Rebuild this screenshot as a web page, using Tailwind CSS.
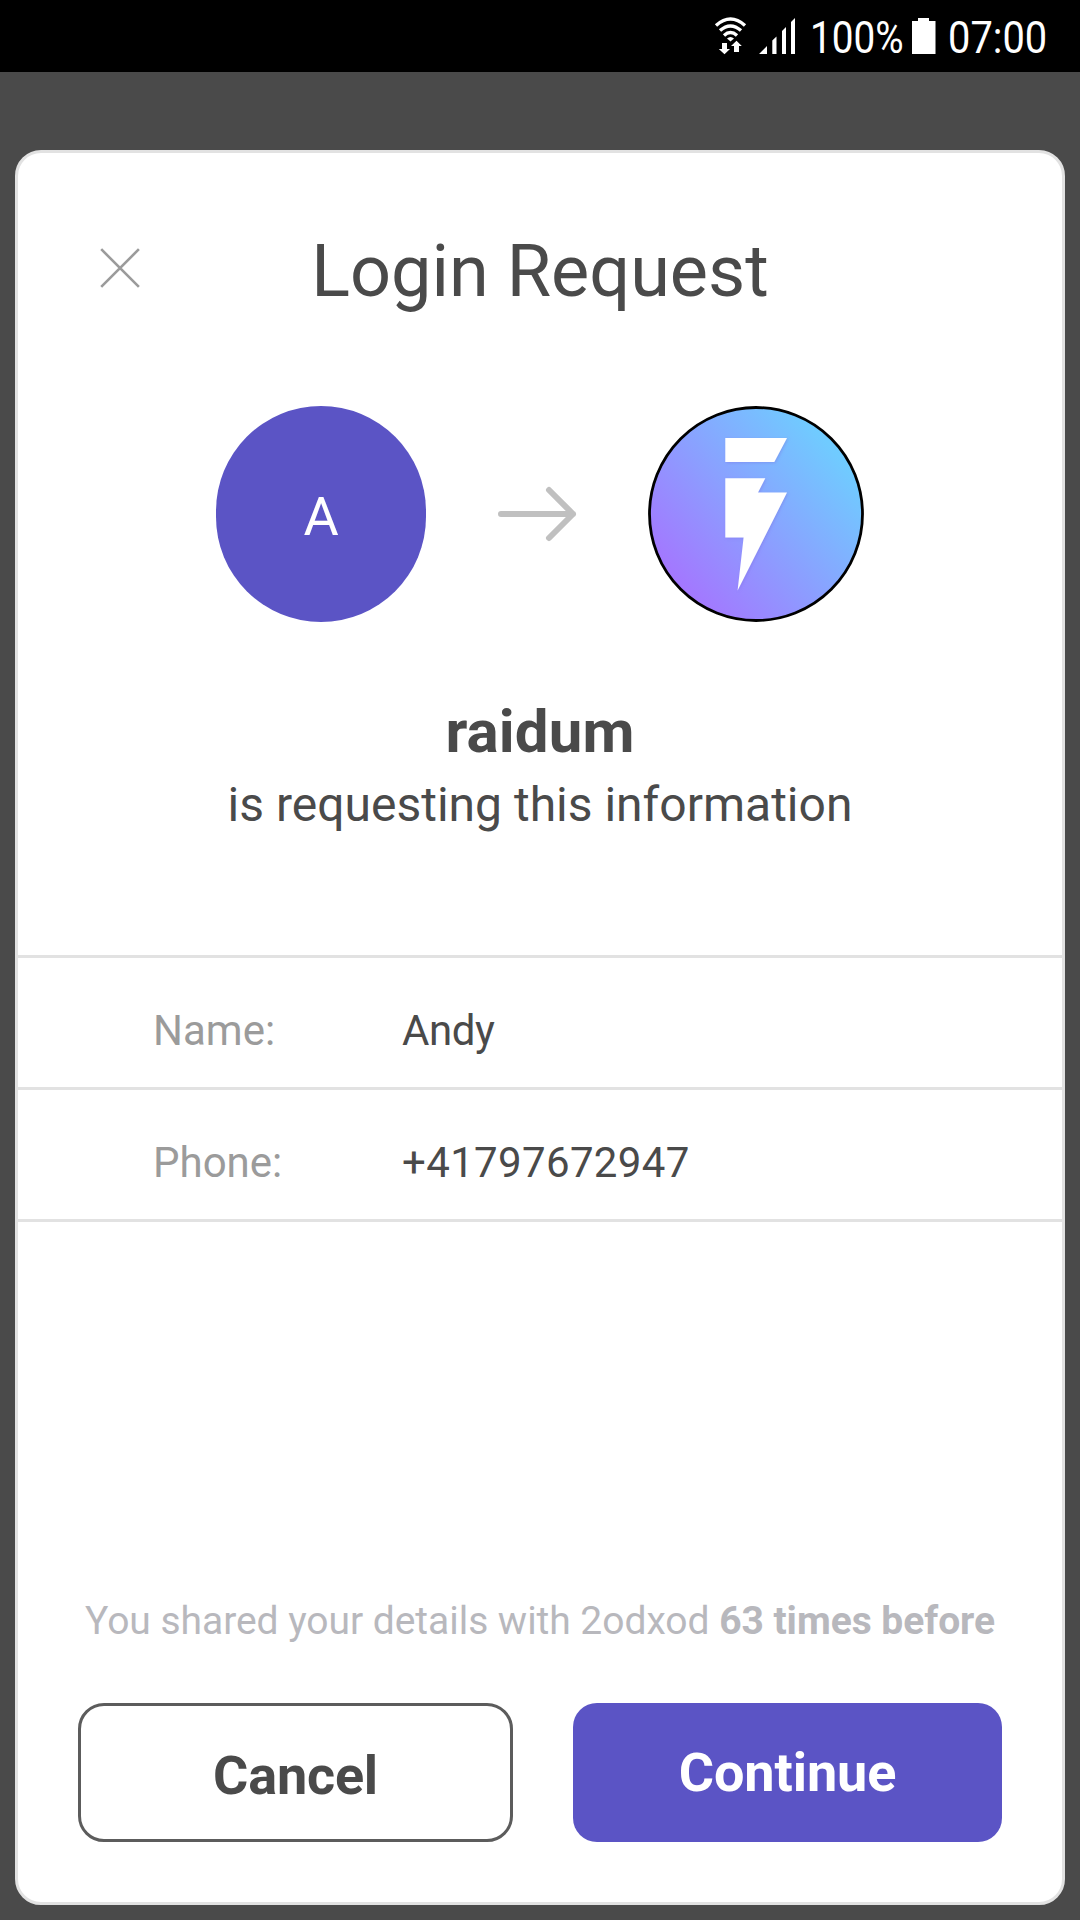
<!DOCTYPE html>
<html lang="en">
<head>
  <meta charset="UTF-8" />
  <meta name="viewport" content="width=device-width, initial-scale=1.0"/>
  <title>Login Request</title>
  <script src="https://cdn.jsdelivr.net/npm/@tailwindcss/browser@4"></script>
</head>
<body class="bg-[#4a4a4a] text-[#4a4a4a] font-['Roboto',sans-serif]">
  <div class="w-[1080px] h-[1920px] flex flex-col overflow-hidden">

    <!-- Status bar -->
    <div class="h-[72px] shrink-0 bg-black text-white flex items-center pl-[714px]">
      <!-- wifi -->
      <svg class="w-[34px] h-[40px] shrink-0" viewBox="714 16 34 40" fill="none" stroke="#fff" stroke-width="3.4">
        <path d="M716 25.500Q730.500 12.500 745 25.500" />
        <path d="M720 30.600Q730.500 21.300 741 30.600" />
        <path d="M724 35.500Q730.500 29.600 737 35.500" />
        <path d="M727 38.500Q730.500 35.500 734 38.500L730.500 41.500Z" fill="#fff" stroke="none" />
        <path d="M722 43h5v6h3l-5.500 5.300-5.700-5.300h3.200zM734 52v-6h-3l5.500-5.300 5.300 5.300h-2.800v6z" fill="#fff" stroke="none" />
      </svg>
      <!-- signal -->
      <svg class="w-[38px] h-[40px] shrink-0 ml-[10px]" viewBox="758 16 38 40" fill="#fff">
        <path d="M759 54L767 46V54ZM772.300 54V40.500L776.500 36.500V54ZM782 54V31L786 27V54ZM791 54V22L795 18V54Z" />
      </svg>
      <div class="w-[90px] shrink-0 ml-[14px] flex">
        <span class="text-[45px] leading-[72px] origin-left scale-x-[.86] translate-y-[2px]">100%</span>
      </div>
      <!-- battery -->
      <svg class="w-[24px] h-[36px] shrink-0 ml-[12px]" viewBox="0 0 24 36" fill="#fff">
        <path d="M6 0h11v3h6.500v33h-23.500v-33h6z" />
      </svg>
      <div class="w-[98px] shrink-0 ml-[12px] flex">
        <span class="text-[45px] leading-[72px] origin-left scale-x-[.885] translate-y-[2px]">07:00</span>
      </div>
    </div>

    <!-- Dialog -->
    <div class="mt-[78px] mx-[15px] h-[1755px] shrink-0 bg-white border-[3px] border-[#e2e2e2] rounded-[26px] flex flex-col">

      <div class="mt-[77px] px-[81px] grid grid-cols-[1fr_auto_1fr] items-center">
        <svg class="w-[42px] h-[42px] -mt-[8px]" viewBox="0 0 42 42" fill="none" stroke="#9b9b9b" stroke-width="2.600">
          <path d="M2.200 2.200L39.900 39.900M39.900 2.200L2.200 39.900" />
        </svg>
        <h1 class="text-[72px] leading-[84px]">Login Request</h1>
        <span></span>
      </div>

      <!-- User and app -->
      <div class="mt-[92px] flex items-center justify-center">
        <div class="w-[210px] h-[216px] rounded-[105px] bg-[#5b54c5] text-white text-[54px] leading-[222px] text-center">A</div>
        <svg class="w-[80px] h-[56px] ml-[71px] mr-[71px]" viewBox="0 0 80 56" fill="none" stroke="#c0c0c0" stroke-width="6" stroke-linecap="round" stroke-linejoin="round">
          <path d="M4 28H76M52 4L76 28L52 52" />
        </svg>
        <svg class="w-[216px] h-[216px]" viewBox="648 406 216 216">
          <defs>
            <linearGradient id="appBg" x1="0.12" y1="0.88" x2="0.88" y2="0.22">
              <stop offset="0" stop-color="#a673ff" />
              <stop offset="1" stop-color="#70cbff" />
            </linearGradient>
            <filter id="soft" x="-20%" y="-20%" width="140%" height="140%">
              <feDropShadow dx="1" dy="1" stdDeviation="1.500" flood-color="#7a6ae0" flood-opacity="0.4" />
            </filter>
          </defs>
          <circle cx="756" cy="514" r="106.500" fill="url(#appBg)" stroke="#000" stroke-width="2.800" />
          <path filter="url(#soft)" fill="#fff" d="M725.300 438H787L774.300 462H725.300ZM725.300 478.200H765.300L758 492.600H787L737.600 590.500L743.600 537.500H725.300Z" />
        </svg>
      </div>

      <div class="mt-[75px] text-center">
        <p class="text-[60px] leading-[70px] font-bold tracking-[.1px]">raidum</p>
        <p class="text-[48px] leading-[56px] mt-[10px]">is requesting this information</p>
      </div>

      <!-- Shared details -->
      <div class="mt-[122px] border-t-[3px] border-[#e2e2e2] text-[42px]">
        <div class="h-[132px] flex items-center pl-[135px] pt-[15px] border-b-[3px] border-[#e2e2e2]">
          <span class="w-[249px] text-[#9b9b9b]">Name:</span>
          <span class="tracking-[-.4px]">Andy</span>
        </div>
        <div class="h-[132px] flex items-center pl-[135px] pt-[15px] border-b-[3px] border-[#e2e2e2]">
          <span class="w-[249px] text-[#9b9b9b]">Phone:</span>
          <span class="tracking-[.35px]">+41797672947</span>
        </div>
      </div>

      <p class="mt-auto text-center text-[39px] leading-[46px] text-[#b8b8bd] whitespace-nowrap tracking-[-.04px]">You shared your details with 2odxod <b class="font-bold">63 times before</b></p>

      <div class="mt-[59px] mb-[60px] px-[60px] flex justify-between text-[54px] font-bold">
        <button class="w-[435px] h-[139px] border-[3px] border-[#5c5c5c] rounded-[26px] pt-[5px] tracking-[-.2px]">Cancel</button>
        <button class="w-[429px] h-[139px] bg-[#5b54c5] text-white rounded-[24px] tracking-[-.1px]">Continue</button>
      </div>
    </div>
  </div>
</body>
</html>
